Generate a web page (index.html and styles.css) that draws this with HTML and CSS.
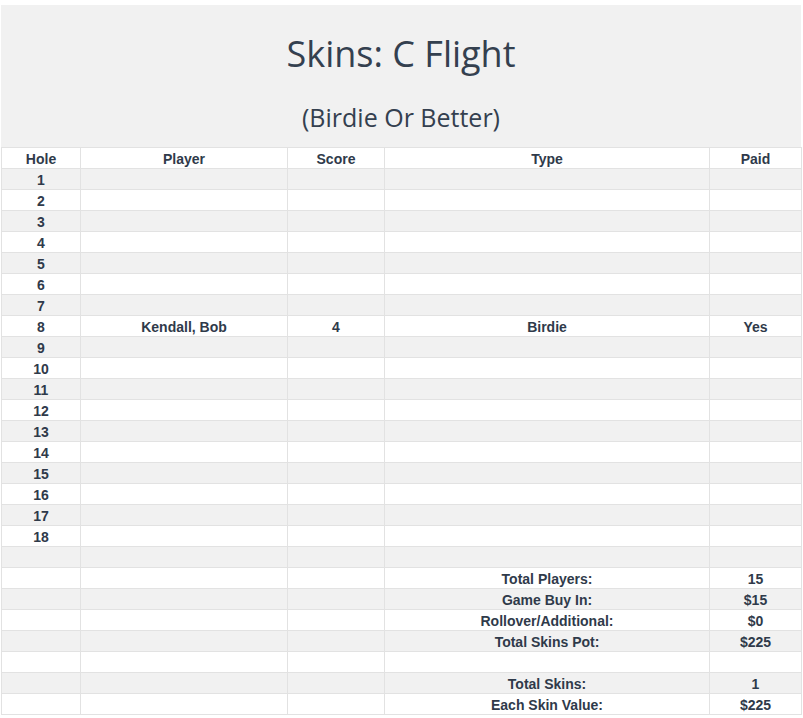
FILE: index.html
```html
<!DOCTYPE html>
<html>
<head>
<meta charset="utf-8">
<link rel="stylesheet" href="styles.css">
</head>
<body>
<div class="sheet">
  <header class="banner">
    <h1 class="title">Skins: C Flight</h1>
    <p class="subtitle">(Birdie Or Better)</p>
  </header>
  <table class="grid">
    <colgroup>
      <col class="c-hole"><col class="c-player"><col class="c-score"><col class="c-type"><col class="c-paid">
    </colgroup>
    <thead>
      <tr><th>Hole</th><th>Player</th><th>Score</th><th>Type</th><th>Paid</th></tr>
    </thead>
    <tbody>
      <tr><td>1</td><td></td><td></td><td></td><td></td></tr>
      <tr><td>2</td><td></td><td></td><td></td><td></td></tr>
      <tr><td>3</td><td></td><td></td><td></td><td></td></tr>
      <tr><td>4</td><td></td><td></td><td></td><td></td></tr>
      <tr><td>5</td><td></td><td></td><td></td><td></td></tr>
      <tr><td>6</td><td></td><td></td><td></td><td></td></tr>
      <tr><td>7</td><td></td><td></td><td></td><td></td></tr>
      <tr><td>8</td><td>Kendall, Bob</td><td>4</td><td>Birdie</td><td>Yes</td></tr>
      <tr><td>9</td><td></td><td></td><td></td><td></td></tr>
      <tr><td>10</td><td></td><td></td><td></td><td></td></tr>
      <tr><td>11</td><td></td><td></td><td></td><td></td></tr>
      <tr><td>12</td><td></td><td></td><td></td><td></td></tr>
      <tr><td>13</td><td></td><td></td><td></td><td></td></tr>
      <tr><td>14</td><td></td><td></td><td></td><td></td></tr>
      <tr><td>15</td><td></td><td></td><td></td><td></td></tr>
      <tr><td>16</td><td></td><td></td><td></td><td></td></tr>
      <tr><td>17</td><td></td><td></td><td></td><td></td></tr>
      <tr><td>18</td><td></td><td></td><td></td><td></td></tr>
      <tr><td></td><td></td><td></td><td></td><td></td></tr>
      <tr><td></td><td></td><td></td><td>Total Players:</td><td>15</td></tr>
      <tr><td></td><td></td><td></td><td>Game Buy In:</td><td>$15</td></tr>
      <tr><td></td><td></td><td></td><td>Rollover/Additional:</td><td>$0</td></tr>
      <tr><td></td><td></td><td></td><td>Total Skins Pot:</td><td>$225</td></tr>
      <tr><td></td><td></td><td></td><td></td><td></td></tr>
      <tr><td></td><td></td><td></td><td>Total Skins:</td><td>1</td></tr>
      <tr><td></td><td></td><td></td><td>Each Skin Value:</td><td>$225</td></tr>
    </tbody>
  </table>
</div>
</body>
</html>
```
FILE: styles.css
```css
html, body {
  margin: 0;
  padding: 0;
  background: #ffffff;
}
body {
  padding: 5px 2px 0 1px;
}
.sheet {
  width: 800px;
}
.banner {
  background: #f1f1f1;
  height: 142px;
  box-sizing: border-box;
  padding-top: 28px;
  text-align: center;
  color: #34404f;
  font-family: "Open Sans", "Noto Sans", sans-serif;
}
.title {
  margin: 0;
  font-size: 36px;
  line-height: 42px;
  font-weight: 400;
}
.subtitle {
  margin: 28px 0 0;
  font-size: 25px;
  line-height: 29px;
  font-weight: 400;
}
.grid {
  width: 800px;
  table-layout: fixed;
  border-collapse: collapse;
  font-family: "Liberation Sans", Arial, sans-serif;
  font-size: 14px;
  font-weight: bold;
  color: #2f3a4a;
}
.c-hole { width: 79px; }
.c-player { width: 207px; }
.c-score { width: 97px; }
.c-type { width: 325px; }
.c-paid { width: 92px; }
.grid th, .grid td {
  height: 19px;
  padding: 1px 0 0;
  text-align: center;
  vertical-align: middle;
  border: 1px solid #e2e2e2;
  line-height: 16px;
}
.grid th {
  font-weight: bold;
  background: #ffffff;
}
.grid tbody tr:nth-child(odd) td {
  background: #f1f1f1;
}
.grid tbody tr:nth-child(even) td {
  background: #ffffff;
}
```
